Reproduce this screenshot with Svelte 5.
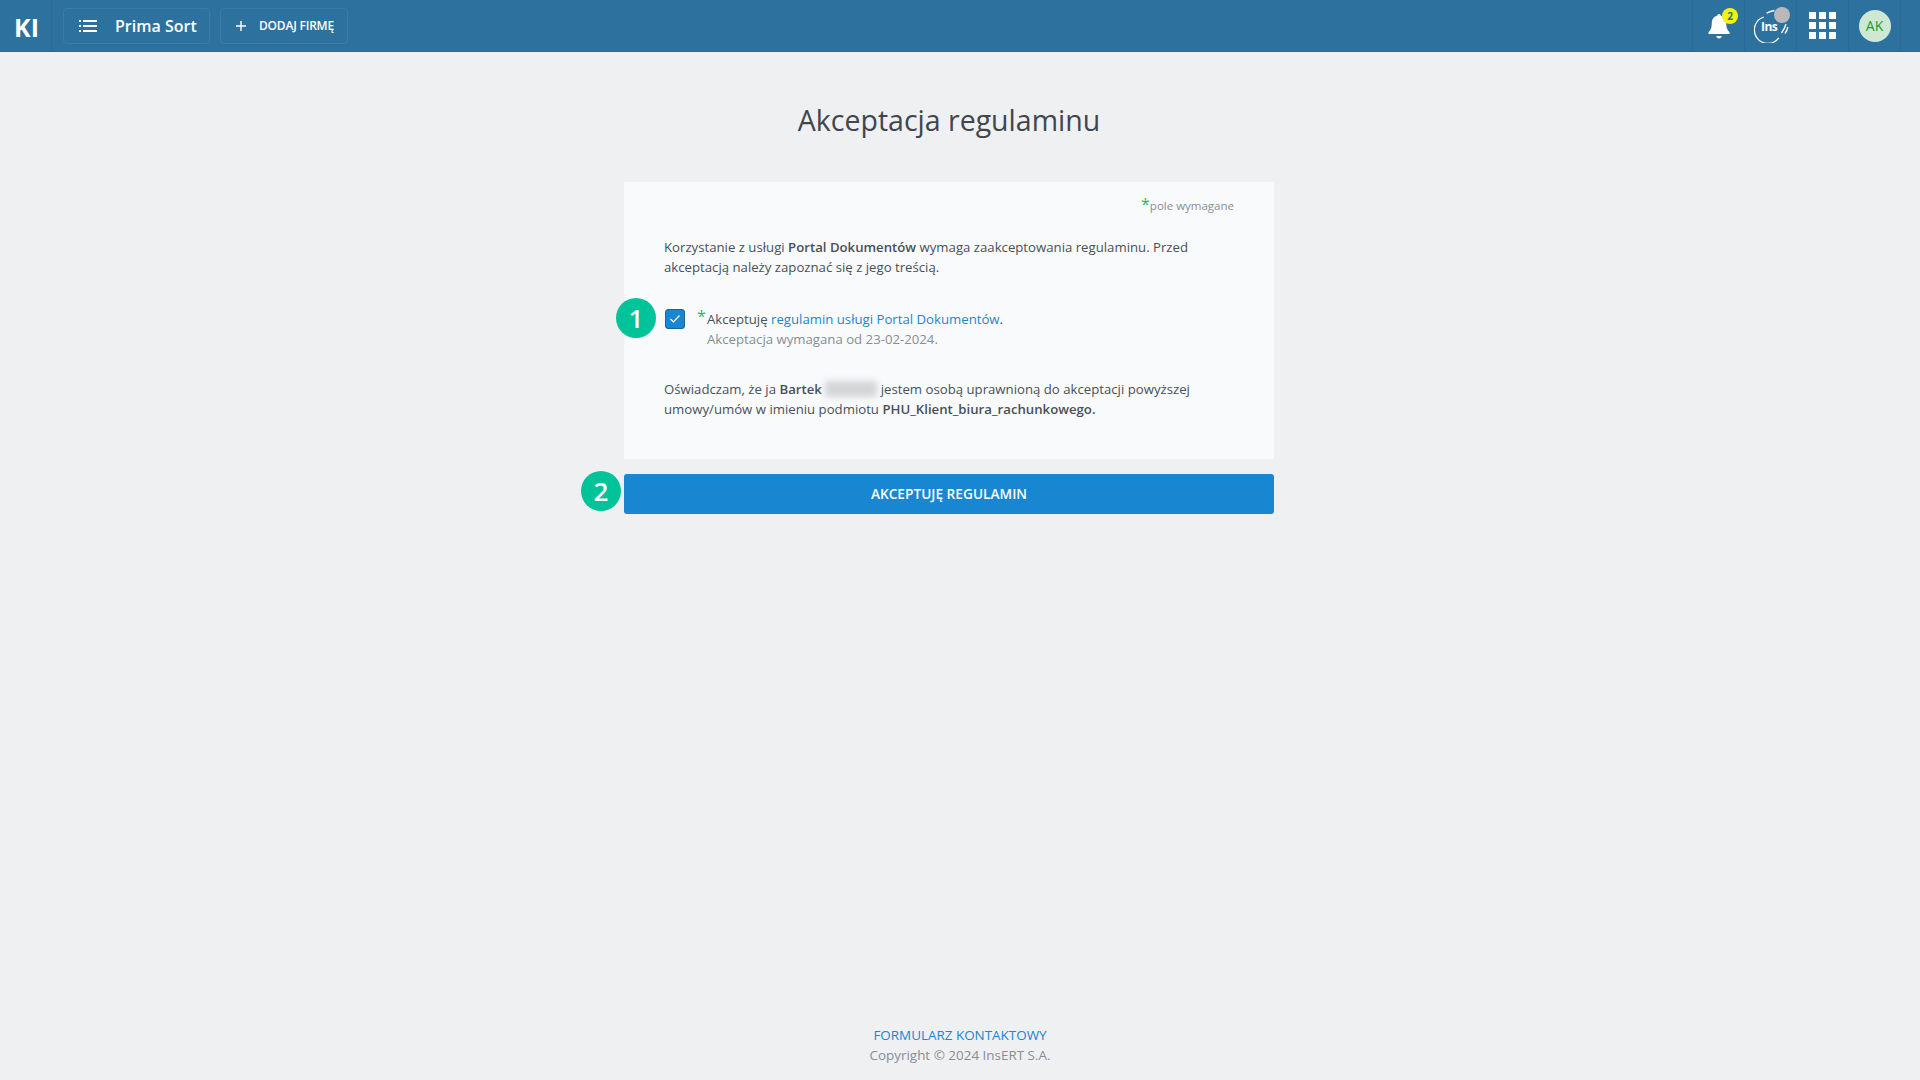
<script>
	let accepted = $state(true);
</script>

<div class="page">
	<header class="topbar">
		<div class="logo">KI</div>
		<button class="nav-btn company">
			<svg width="18" height="12" viewBox="0 0 18 12" fill="#fff">
				<rect x="0" y="0" width="2" height="2" />
				<rect x="4" y="0" width="14" height="2" />
				<rect x="0" y="5" width="2" height="2" />
				<rect x="4" y="5" width="14" height="2" />
				<rect x="0" y="10" width="2" height="2" />
				<rect x="4" y="10" width="14" height="2" />
			</svg>
			<span>Prima Sort</span>
		</button>
		<button class="nav-btn add">
			<svg width="10" height="10" viewBox="0 0 10 10" stroke="#fff" stroke-width="1.4">
				<path d="M5 0v10M0 5h10" />
			</svg>
			<span>DODAJ FIRMĘ</span>
		</button>

		<div class="tools">
			<div class="tool">
				<svg width="24" height="28" viewBox="0 0 24 28" fill="#fff">
					<path d="M12 2c1 0 1.800.8 1.800 1.700 3.700.8 5.400 3.800 5.400 7.600 0 4.200 1 6.700 3.300 9v1.700H1.500V20.300c2.300-2.300 3.300-4.800 3.300-9 0-3.800 1.700-6.800 5.400-7.600C10.200 2.800 11 2 12 2z" />
					<path d="M9.200 24h5.600c-.3 1.500-1.400 2.400-2.800 2.400S9.500 25.500 9.200 24z" />
				</svg>
				<span class="bell-badge">2</span>
			</div>
			<div class="tool">
				<svg class="ins-ring" width="38" height="34" viewBox="0 0 38 34" fill="none" stroke="#fff" stroke-width="1.300">
					<path d="M9.800 8A13.500 13.500 0 1 0 24.800 28.800" />
					<path d="M12.500 4.200c2.500-1.400 5-2.300 8-2.700" />
					<path d="M27.500 24c2-2.700 3.500-5.700 4.500-9" />
					<path d="M31 24.500c1.300-1.800 2.300-4 2.800-6.500" />
				</svg>
				<span class="ins-text">Ins</span>
				<span class="ins-dot"></span>
			</div>
			<div class="tool">
				<div class="apps">
					{#each Array(9) as _}
						<i></i>
					{/each}
				</div>
			</div>
			<div class="tool">
				<div class="avatar">AK</div>
			</div>
		</div>
	</header>

	<main class="content">
		<h1>Akceptacja regulaminu</h1>

		<div class="card-wrap">
			<section class="card">
				<div class="required-note"><span class="star">*</span>pole wymagane</div>

				<p class="intro">
					Korzystanie z usługi <b>Portal Dokumentów</b> wymaga zaakceptowania regulaminu. Przed
					akceptacją należy zapoznać się z jego treścią.
				</p>

				<div class="accept-row">
					<span class="step one">1</span>
					<label class="check">
						<input type="checkbox" bind:checked={accepted} />
						<svg width="12" height="10" viewBox="0 0 12 10" fill="none" stroke="#fff" stroke-width="1.200">
							<path d="M1.500 5l3 3 6-6.500" />
						</svg>
					</label>
					<span class="star inline">*</span>
					<div class="accept-text">
						<div>Akceptuję <a href="#regulamin">regulamin usługi Portal Dokumentów</a>.</div>
						<div class="muted">Akceptacja wymagana od 23-02-2024.</div>
					</div>
				</div>

				<p class="statement">
					Oświadczam, że ja <b>Bartek</b> <span class="blurred"></span> jestem osobą uprawnioną do akceptacji powyższej
					umowy/umów w imieniu podmiotu <b>PHU_Klient_biura_rachunkowego.</b>
				</p>
			</section>

			<div class="submit-row">
				<span class="step two">2</span>
				<button class="submit">AKCEPTUJĘ REGULAMIN</button>
			</div>
		</div>
	</main>

	<footer class="footer">
		<a href="#kontakt">FORMULARZ KONTAKTOWY</a>
		<div>Copyright © 2024 InsERT S.A.</div>
	</footer>
</div>

<style>
	:global(body) {
		margin: 0;
		background: #eff0f2;
		font-family: "Open Sans", "Noto Sans", sans-serif;
		color: #495057;
	}

	.page {
		height: 1080px;
		display: flex;
		flex-direction: column;
		overflow: hidden;
	}

	.topbar {
		height: 51px;
		flex: none;
		display: flex;
		align-items: center;
		background: #2d729f;
		box-sizing: content-box;
		border-bottom: 1px solid #2a6a95;
	}

	.logo {
		width: 52px;
		height: 51px;
		display: flex;
		align-items: center;
		justify-content: center;
		box-sizing: border-box;
		border-right: 1px solid #2a6a95;
		padding: 2px 0 0 2px;
		color: #fff;
		font-size: 25px;
		font-weight: 700;
	}

	.nav-btn {
		height: 36px;
		display: flex;
		align-items: center;
		background: transparent;
		border: 1px solid #3c7ca6;
		border-radius: 4px;
		color: #fff;
		font-family: inherit;
		padding: 0;
	}

	.company {
		width: 147px;
		margin-left: 11px;
		padding-left: 15px;
		gap: 18px;
		font-size: 16px;
		font-weight: 600;
		box-sizing: border-box;
	}

	.add {
		width: 128px;
		margin-left: 10px;
		padding-left: 15px;
		gap: 13px;
		font-size: 12px;
		font-weight: 600;
		letter-spacing: -0.2px;
		box-sizing: border-box;
	}

	.tools {
		margin-left: auto;
		margin-right: 19px;
		display: flex;
		height: 51px;
		border-left: 1px solid #2a6a95;
	}

	.tool {
		position: relative;
		width: 51px;
		display: flex;
		align-items: center;
		justify-content: center;
		border-right: 1px solid #2a6a95;
	}

	.bell-badge {
		position: absolute;
		top: 8px;
		left: 29px;
		width: 16px;
		height: 16px;
		border-radius: 50%;
		background: #f4f40a;
		color: #2d729f;
		font-size: 10px;
		font-weight: 700;
		line-height: 16px;
		text-align: center;
	}

	.ins-ring {
		margin-left: 4px;
	}

	.ins-text {
		position: absolute;
		left: 16px;
		top: 19px;
		color: #fff;
		font-size: 12px;
		font-weight: 700;
		letter-spacing: -0.5px;
		line-height: 16px;
	}

	.ins-dot {
		position: absolute;
		top: 7px;
		left: 29px;
		width: 16px;
		height: 16px;
		border-radius: 50%;
		background: #b9b9bb;
	}

	.apps {
		display: grid;
		grid-template-columns: repeat(3, 7px);
		gap: 3px;
	}

	.apps i {
		width: 7px;
		height: 7px;
		background: #fff;
	}

	.avatar {
		width: 32px;
		height: 32px;
		border-radius: 50%;
		background: #cfe8d3;
		color: #13a02c;
		font-size: 14px;
		line-height: 32px;
		text-align: center;
	}

	.content {
		width: 1898px;
		flex: 1;
	}

	h1 {
		margin: 48px 0 0;
		font-size: 28.5px;
		line-height: 40px;
		font-weight: 400;
		text-align: center;
		color: #3f464d;
	}

	.card-wrap {
		width: 650px;
		margin: 42px auto 0;
	}

	.card {
		background: #f9fafc;
		padding: 12px 40px 39px;
		height: 277px;
		box-sizing: border-box;
		font-size: 13.2px;
		line-height: 20px;
	}

	.required-note {
		text-align: right;
		font-size: 11.5px;
		line-height: 20px;
		color: #868e96;
	}

	.star {
		color: #2fb45a;
		font-size: 16px;
	}

	p {
		margin: 0;
	}

	.intro {
		margin-top: 21px;
	}

	b {
		font-weight: 600;
	}

	.accept-row {
		position: relative;
		display: flex;
		margin-top: 32px;
	}

	.step {
		position: absolute;
		width: 40px;
		height: 40px;
		border-radius: 50%;
		background: #00c39a;
		color: #fff;
		font-size: 26px;
		font-weight: 600;
		line-height: 40px;
		text-align: center;
	}

	.step.one {
		left: -48px;
		top: -11px;
	}

	.check {
		position: relative;
		width: 20px;
		height: 20px;
		flex: none;
		display: flex;
		align-items: center;
		justify-content: center;
		background: #1986d1;
		border: 1px solid #1667a0;
		border-radius: 3px;
		box-sizing: border-box;
		margin-left: 1px;
	}

	.check input {
		position: absolute;
		inset: 0;
		margin: 0;
		opacity: 0;
	}

	.star.inline {
		margin-left: 12px;
		line-height: 14px;
		width: 10px;
	}

	.accept-text a,
	.footer a {
		color: #1986d1;
		text-decoration: none;
	}

	.muted {
		color: #868e96;
	}

	.statement {
		margin-top: 30px;
	}

	.blurred {
		display: inline-block;
		width: 52px;
		height: 16px;
		vertical-align: -3px;
		background: #d3d5d7;
		filter: blur(3px);
	}

	.submit-row {
		position: relative;
		margin-top: 15px;
	}

	.step.two {
		left: -43px;
		top: -3px;
	}

	.submit {
		display: block;
		width: 100%;
		height: 40px;
		padding: 0 0 2px;
		background: #1986d1;
		border: none;
		border-radius: 3px;
		color: #fff;
		font-family: inherit;
		font-size: 13.7px;
		font-weight: 600;
	}

	.footer {
		text-align: center;
		font-size: 13.45px;
		line-height: 20px;
		color: #868e96;
		padding-bottom: 15px;
	}
</style>
